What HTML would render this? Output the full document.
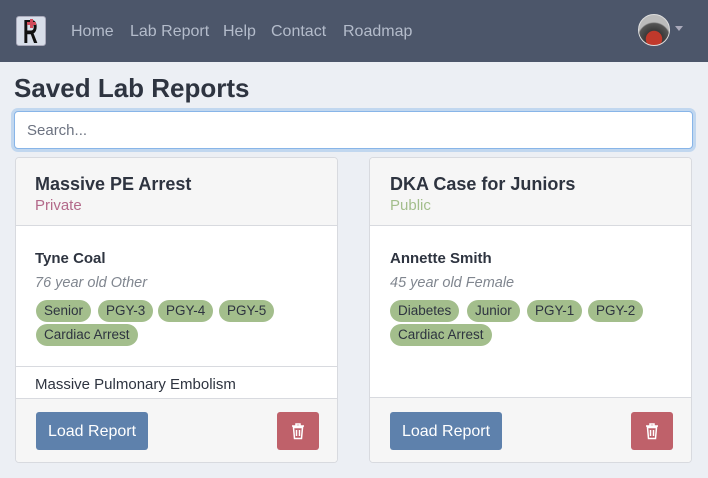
<!DOCTYPE html>
<html><head><style>
*{box-sizing:border-box;margin:0;padding:0}
body{width:708px;height:478px;background:#eceff4;font-family:"Liberation Sans",sans-serif;position:relative;overflow:hidden;color:#2e3440}
.a{position:absolute;white-space:nowrap}
.nav{position:absolute;left:0;top:0;width:708px;height:62px;background:#4c566a}
.nl{color:#b4bccb;font-size:16px;top:23px}
.card{position:absolute;top:157px;width:323px;height:306px;background:#fff;border:1px solid #d8dadf;border-radius:4px;overflow:hidden}
.hd{position:absolute;left:0;top:0;width:100%;height:68px;background:#f6f6f6;border-bottom:1px solid #d8dadf}
.ft{position:absolute;left:0;width:100%;bottom:0;background:#f6f6f6;border-top:1px solid #d8dadf}
.tag{position:absolute;height:22px;line-height:22px;background:#a3be8c;border-radius:11px;font-size:13.5px;padding:0 8px;color:#2e3440}
.btn{position:absolute;left:20px;width:112px;height:38px;background:#5e81ac;border-radius:3px;color:#fff;font-size:16px;line-height:39px;text-align:center}
.del{position:absolute;left:261px;width:42px;height:38px;background:#bf616a;border-radius:3px}
</style></head><body>
<div class="nav"></div>
<div class="a" style="left:16px;top:16px;width:30px;height:30px;background:#d8dee9;border-radius:3px;border:1px solid #aab"></div>
<div class="a" style="left:23px;top:15px;font-size:33px;line-height:33px;font-weight:bold;color:#111;transform:scaleX(0.62);transform-origin:0 0">R</div>
<div class="a" style="left:27px;top:22px;width:9px;height:3px;background:#d04a5a"></div>
<div class="a" style="left:30px;top:19px;width:3px;height:9px;background:#d04a5a"></div>
<div class="a nl" style="left:71px">Home</div>
<div class="a nl" style="left:130px">Lab Report</div>
<div class="a nl" style="left:223px">Help</div>
<div class="a nl" style="left:271px">Contact</div>
<div class="a nl" style="left:343px">Roadmap</div>
<div class="a" style="left:638px;top:14px;width:32px;height:32px;border-radius:50%;background:radial-gradient(circle at 50% 80%,#c0392b 28%,#3a3a3a 30%,#555 55%,#bbb 60%);border:1px solid #ddd"></div>
<div class="a" style="left:675px;top:26px;width:0;height:0;border-left:4px solid transparent;border-right:4px solid transparent;border-top:5px solid #aab"></div>
<div class="a" style="left:14px;top:73px;font-size:26px;font-weight:bold;color:#2e3440">Saved Lab Reports</div>
<div class="a" style="left:14px;top:111px;width:679px;height:38px;background:#fff;border:1px solid #88b5e8;border-radius:4px;box-shadow:0 0 0 3px rgba(94,160,230,.3)"></div>
<div class="a" style="left:27px;top:122px;font-size:15px;color:#6c7280">Search...</div>

<div class="card" style="left:15px">
<div class="hd"></div>
<div class="a" style="left:19px;top:16px;font-size:18px;font-weight:bold">Massive PE Arrest</div>
<div class="a" style="left:19px;top:39px;font-size:15px;color:#b3698a">Private</div>
<div class="a" style="left:19px;top:92px;font-size:15px;font-weight:bold">Tyne Coal</div>
<div class="a" style="left:19px;top:117px;font-size:14.5px;font-style:italic;color:#80868f">76 year old Other</div>
<div class="tag" style="left:20px;top:142px">Senior</div>
<div class="tag" style="left:82px;top:142px">PGY-3</div>
<div class="tag" style="left:142px;top:142px">PGY-4</div>
<div class="tag" style="left:203px;top:142px">PGY-5</div>
<div class="tag" style="left:20px;top:166px">Cardiac Arrest</div>
<div class="a" style="left:0;top:208px;width:100%;height:1px;background:#d8dadf"></div>
<div class="a" style="left:19px;top:218px;font-size:15px">Massive Pulmonary Embolism</div>
<div class="ft" style="height:64px"></div>
<div class="btn" style="top:254px">Load Report</div>
<div class="del" style="top:254px"><svg width="42" height="38"><g fill="none" stroke="#fff" stroke-width="1.5"><path d="M15 14h12M19 14v-2h4v2M16.5 15.5h9l-1 11h-7z"/><path d="M19.5 18v6M22.5 18v6"/></g></svg></div>
</div>

<div class="card" style="left:369px">
<div class="hd"></div>
<div class="a" style="left:20px;top:16px;font-size:18px;font-weight:bold">DKA Case for Juniors</div>
<div class="a" style="left:20px;top:39px;font-size:15px;color:#a3be8c">Public</div>
<div class="a" style="left:20px;top:92px;font-size:15px;font-weight:bold">Annette Smith</div>
<div class="a" style="left:20px;top:117px;font-size:14.5px;font-style:italic;color:#80868f">45 year old Female</div>
<div class="tag" style="left:20px;top:142px">Diabetes</div>
<div class="tag" style="left:97px;top:142px">Junior</div>
<div class="tag" style="left:157px;top:142px">PGY-1</div>
<div class="tag" style="left:218px;top:142px">PGY-2</div>
<div class="tag" style="left:20px;top:166px">Cardiac Arrest</div>
<div class="ft" style="height:65px"></div>
<div class="btn" style="top:254px">Load Report</div>
<div class="del" style="top:254px"><svg width="42" height="38"><g fill="none" stroke="#fff" stroke-width="1.5"><path d="M15 14h12M19 14v-2h4v2M16.5 15.5h9l-1 11h-7z"/><path d="M19.5 18v6M22.5 18v6"/></g></svg></div>
</div>
</body></html>
